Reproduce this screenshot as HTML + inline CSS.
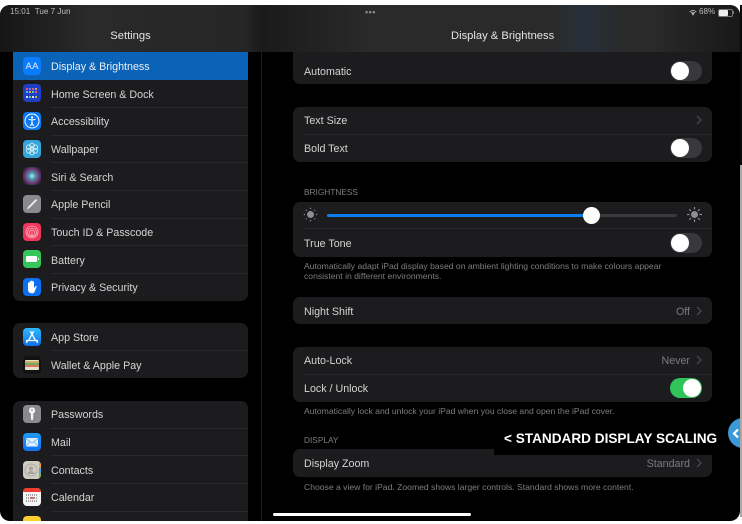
<!DOCTYPE html>
<html><head><meta charset="utf-8"><style>
html,body{margin:0;padding:0;background:#fff}
#s{position:relative;width:742px;height:524px;overflow:hidden;background:#fff;font-family:"Liberation Sans",sans-serif;color:#d4d4d4;font-size:10.7px;filter:blur(.3px)}
#s div,#s svg,#s span{position:absolute}
.t{white-space:nowrap;line-height:14px;height:14px;margin-top:.7px}
.card{background:#1c1c1e;left:293px;width:419px;border-radius:7px}
.scard{background:#1c1c1e;left:13px;width:235px}
.sep{height:1px;background:#29292b}
.ic{left:23px;width:18px;height:18px;border-radius:4px;overflow:hidden}
.tog{left:670px;width:32px;height:20px;border-radius:10px;background:#39393d}
.knob{width:18px;height:18px;border-radius:9px;background:#fff;top:1px;left:1px}
.v{color:#7c7c80}
.t.foot{color:#7e7e82;font-size:8.6px;left:304px;margin-top:-.5px}
.t.hdr{color:#7e7e82;font-size:8.3px;left:304px;margin-top:0}
.chev{left:696px;width:6px;height:10px}
.t.top{margin-top:0}
</style></head><body><div id="s">
<div id="scr" style="left:0;top:5px;width:740px;height:516px;background:#000;border-radius:10px;overflow:hidden">
<div style="left:0;top:0;width:740px;height:47px;background:linear-gradient(90deg,#161616 0,#2a2a2a 12%,#262626 33%,#1a1a1a 35.3%,#2a2a2a 50%,#2a2a2a 74%,#27303a 79%,#2a2a2a 84%,#2a2a2a 88%,#181818 100%)"></div>
<div style="left:261px;top:0;width:1px;height:516px;background:#1e1e1e"></div>
</div>
<div style="left:740px;top:5px;width:2px;height:160px;background:#0a0a0a"></div>

<div class="t top" style="left:10px;top:5px;font-size:8.1px;color:#bdbdbd">15:01&nbsp;&nbsp;Tue 7 Jun</div>
<div class="t top" style="left:365px;top:5px;font-size:9px;letter-spacing:.5px;color:#8a8a8a;font-weight:bold">•••</div>
<div class="t top" style="left:699px;top:5px;font-size:8.1px;color:#bdbdbd">68%</div>
<svg style="left:689px;top:9px" width="8" height="7" viewBox="0 0 8 7"><path d="M4 6.5 2.6 4.8a2 2 0 0 1 2.8 0zM1.6 3.8a3.6 3.6 0 0 1 4.8 0l-.5.6a2.8 2.8 0 0 0-3.8 0zM.4 2.500a5.4 5.4 0 0 1 7.2 0l-.5.6a4.6 4.6 0 0 0-6.2 0z" fill="#cfcfcf"/></svg>
<div style="left:718px;top:9px;width:13px;height:6px;border:1px solid #777;border-radius:2px"></div>
<div style="left:719px;top:10px;width:9px;height:6px;background:#eee;border-radius:1px"></div>
<div style="left:733px;top:11px;width:1px;height:3px;background:#777"></div>

<div class="t" style="left:0;width:261px;text-align:center;top:28.500px;font-size:11.2px;color:#e4e4e4">Settings</div>
<div class="t" style="left:451px;top:28.500px;font-size:11.2px;color:#e4e4e4">Display &amp; Brightness</div>

<!-- sidebar group 1 -->
<div class="scard" style="top:52px;height:249px;border-radius:0 0 7px 7px"></div>
<div style="left:13px;top:52px;width:235px;height:28px;background:#0b63b8"></div>
<div class="sep" style="left:51px;top:107px;width:197px"></div>
<div class="sep" style="left:51px;top:135px;width:197px"></div>
<div class="sep" style="left:51px;top:162px;width:197px"></div>
<div class="sep" style="left:51px;top:190px;width:197px"></div>
<div class="sep" style="left:51px;top:218px;width:197px"></div>
<div class="sep" style="left:51px;top:245px;width:197px"></div>
<div class="sep" style="left:51px;top:273px;width:197px"></div>
<div class="t" style="left:51px;top:59px;color:#e6eef6">Display &amp; Brightness</div>
<div class="t" style="left:51px;top:87px">Home Screen &amp; Dock</div>
<div class="t" style="left:51px;top:114px">Accessibility</div>
<div class="t" style="left:51px;top:142px">Wallpaper</div>
<div class="t" style="left:51px;top:170px">Siri &amp; Search</div>
<div class="t" style="left:51px;top:197px">Apple Pencil</div>
<div class="t" style="left:51px;top:225px">Touch ID &amp; Passcode</div>
<div class="t" style="left:51px;top:253px">Battery</div>
<div class="t" style="left:51px;top:280px">Privacy &amp; Security</div>

<!-- icons -->
<div class="ic" style="top:57px;background:#0a7cff"><div class="t top" style="left:2.500px;top:3px;font-size:9.500px;color:#e8f2ff;letter-spacing:.3px">AA</div></div>
<div class="ic" style="top:84px;background:#1f3fc4"><svg style="left:0;top:0" width="18" height="18" viewBox="0 0 18 18"><g><rect x="3" y="4" width="2" height="2" fill="#e05a7a"/><rect x="6" y="4" width="2" height="2" fill="#9a6ae0"/><rect x="9" y="4" width="2" height="2" fill="#e05a7a"/><rect x="12" y="4" width="2" height="2" fill="#e0a040"/><rect x="3" y="7" width="2" height="2" fill="#50c0e0"/><rect x="6" y="7" width="2" height="2" fill="#e0a040"/><rect x="9" y="7" width="2" height="2" fill="#60d080"/><rect x="12" y="7" width="2" height="2" fill="#e05a7a"/><rect x="3" y="12" width="2" height="2" fill="#d0e0f0"/><rect x="6" y="12" width="2" height="2" fill="#60d080"/><rect x="9" y="12" width="2" height="2" fill="#d0e0f0"/><rect x="12" y="12" width="2" height="2" fill="#e0a040"/></g></svg></div>
<div class="ic" style="top:112px;background:#0a78f5"><svg style="left:0;top:0" width="18" height="18" viewBox="0 0 18 18"><circle cx="9" cy="9" r="7" fill="none" stroke="#fff" stroke-width="1"/><circle cx="9" cy="5.500" r="1.200" fill="#fff"/><path d="M5.500 7.300 9 8l3.500-.7M9 8v3M9 11l-1.600 3M9 11l1.600 3" fill="none" stroke="#fff" stroke-width="1.100"/></svg></div>
<div class="ic" style="top:140px;background:#35a5d8"><svg style="left:0;top:0" width="18" height="18" viewBox="0 0 18 18"><g fill="none" stroke="#cfeaf5" stroke-width=".9"><circle cx="9" cy="9" r="2"/><circle cx="9" cy="5.500" r="2.400"/><circle cx="9" cy="12.500" r="2.400"/><circle cx="5.900" cy="7.200" r="2.400"/><circle cx="12.100" cy="7.200" r="2.400"/><circle cx="5.900" cy="10.800" r="2.400"/><circle cx="12.100" cy="10.800" r="2.400"/></g></svg></div>
<div class="ic" style="top:167px;background:radial-gradient(circle at 50% 50%,#cfe6f5 0,#3f9fb0 25%,#7a3a7a 55%,#1d2030 85%)"></div>
<div class="ic" style="top:195px;background:#8a8a8e"><svg style="left:0;top:0" width="18" height="18" viewBox="0 0 18 18"><path d="M4 14.500 5 12 13 4l1.200 1.200-8 8z" fill="#f2f2f2"/></svg></div>
<div class="ic" style="top:223px;background:#f0365a"><svg style="left:0;top:0" width="18" height="18" viewBox="0 0 18 18"><g fill="none" stroke="#f7b3c0" stroke-width=".8"><circle cx="9" cy="9" r="6"/><circle cx="9" cy="9.500" r="4.400"/><circle cx="9" cy="10" r="2.800"/><path d="M9 8.500v5"/></g></svg></div>
<div class="ic" style="top:250px;background:#35c759"><div style="left:3px;top:6px;width:11px;height:6px;background:#fff;border-radius:1px"></div><div style="left:15px;top:8px;width:1px;height:2px;background:#d8f5df"></div></div>
<div class="ic" style="top:278px;background:#0a70f0"><svg style="left:0;top:0" width="18" height="18" viewBox="0 0 18 18"><path d="M5 10V5a.8.8 0 0 1 1.500 0V3.600a.8.8 0 0 1 1.500 0V3a.8.8 0 0 1 1.500 0V3.800a.8.8 0 0 1 1.500 0V10l1.500-1.800c.7-.7 1.500 0 1 .8L11.500 14c-.5.800-1.200 1.300-2.400 1.300-2.200 0-4.100-1.200-4.100-3.500z" fill="#fff"/></svg></div>

<!-- group 2 -->
<div class="scard" style="top:323px;height:55px;border-radius:7px"></div>
<div class="sep" style="left:51px;top:350px;width:197px"></div>
<div class="t" style="left:51px;top:330px">App Store</div>
<div class="t" style="left:51px;top:358px">Wallet &amp; Apple Pay</div>
<div class="ic" style="top:328px;background:linear-gradient(#2fb8fa,#0d6ff0)"><svg style="left:0;top:0" width="18" height="18" viewBox="0 0 18 18"><path d="M10.500 3.500 5.500 12.500M7.500 3.500l5 9M3.500 12.500h11M3.500 14.500l1-1.600M14.500 14.500l-1-1.600" fill="none" stroke="#fff" stroke-width="1.300" stroke-linecap="round"/></svg></div>
<div class="ic" style="top:356px;background:#111"><div style="left:2px;top:4px;width:14px;height:10px;background:#e6e0c8;border-radius:1px"></div><div style="left:2px;top:5px;width:14px;height:1.500px;background:#c8b060"></div><div style="left:2px;top:7px;width:14px;height:1.500px;background:#70a868"></div><div style="left:2px;top:9px;width:14px;height:1.500px;background:#d8785a"></div></div>

<!-- group 3 -->
<div class="scard" style="top:401px;height:120px;border-radius:7px 7px 0 0"></div>
<div class="sep" style="left:51px;top:428px;width:197px"></div>
<div class="sep" style="left:51px;top:455px;width:197px"></div>
<div class="sep" style="left:51px;top:483px;width:197px"></div>
<div class="sep" style="left:51px;top:511px;width:197px"></div>
<div class="t" style="left:51px;top:407px">Passwords</div>
<div class="t" style="left:51px;top:435px">Mail</div>
<div class="t" style="left:51px;top:463px">Contacts</div>
<div class="t" style="left:51px;top:490px">Calendar</div>
<div class="ic" style="top:405px;background:#8a8a8e"><svg style="left:0;top:0" width="18" height="18" viewBox="0 0 18 18"><path d="M9 2.500a3 3 0 0 1 1.200 5.800V14l-1.200 1.500L7.900 14V8.300A3 3 0 0 1 9 2.500z" fill="#f5f5f5"/><circle cx="9" cy="5" r=".9" fill="#8a8a8e"/></svg></div>
<div class="ic" style="top:433px;background:linear-gradient(#1e9bfa,#1072f0)"><svg style="left:0;top:0" width="18" height="18" viewBox="0 0 18 18"><rect x="3" y="5" width="12" height="8.500" rx="1" fill="#dfeefc"/><path d="M3 5.500 9 10l6-4.500M3 13l4-4.500M15 13l-4-4.500" fill="none" stroke="#6ab0f0" stroke-width=".7"/></svg></div>
<div class="ic" style="top:461px;background:#cfcdc2"><div style="left:16px;top:2px;width:2px;height:5px;background:#e8a040"></div><div style="left:16px;top:7px;width:2px;height:5px;background:#5a9ee0"></div><div style="left:16px;top:12px;width:2px;height:5px;background:#70b860"></div><svg style="left:0;top:0" width="16" height="18" viewBox="0 0 16 18"><circle cx="8" cy="9" r="6" fill="none" stroke="#a5a39a" stroke-width=".8"/><circle cx="8" cy="7.500" r="2" fill="#a5a39a"/><path d="M4.500 13a3.500 3 0 0 1 7 0z" fill="#a5a39a"/></svg></div>
<div class="ic" style="top:488px;background:#f5f5f5"><div style="left:0;top:0;width:18px;height:4px;background:#f03a30"></div><svg style="left:0;top:0" width="18" height="18" viewBox="0 0 18 18"><g stroke="#555" stroke-width="1" stroke-dasharray="1 1"><path d="M3 7h12M3 10h12M3 13h12"/></g><path d="M7 10h4" stroke="#e0302a" stroke-width="1.500"/></svg></div>
<div class="ic" style="top:516px;background:#fccf2e;height:5px;border-radius:4px 4px 0 0"></div>
<div style="left:0;top:521px;width:742px;height:3px;background:#fff"></div>

<!-- right -->
<div class="card" style="top:52px;height:32px;border-radius:0 0 7px 7px"></div>
<div class="t" style="left:304px;top:64px">Automatic</div>
<div class="tog" style="top:61px"><div class="knob"></div></div>

<div class="card" style="top:107px;height:55px"></div>
<div class="sep" style="left:304px;top:134px;width:408px"></div>
<div class="t" style="left:304px;top:113px">Text Size</div>
<div class="t" style="left:304px;top:141px">Bold Text</div>
<svg class="chev" style="top:115px" viewBox="0 0 6 10"><path d="M1 1l4 4-4 4" fill="none" stroke="#505054" stroke-width="1.100"/></svg>
<div class="tog" style="top:138px"><div class="knob"></div></div>

<div class="t hdr" style="top:185px">BRIGHTNESS</div>
<div class="card" style="top:202px;height:55px"></div>
<div class="sep" style="left:304px;top:228px;width:408px"></div>
<svg style="left:303px;top:207px" width="15" height="15" viewBox="0 0 15 15"><circle cx="7.500" cy="7.500" r="3.500" fill="#8e8e92"/><path d="M7.500 .8v1.200M7.500 13v1.200M.8 7.500H2M13 7.500h1.200M2.800 2.800l.8.8M11.400 11.400l.8.8M2.800 12.200l.8-.8M11.400 3.600l.8-.8" stroke="#8e8e92" stroke-width="1.200"/></svg>
<svg style="left:687px;top:207px" width="15" height="15" viewBox="0 0 15 15"><circle cx="7.500" cy="7.500" r="3.500" fill="#8e8e92"/><path d="M7.500 0v2.500M7.500 12.500V15M0 7.500h2.500M12.500 7.500H15M2.200 2.200l1.800 1.800M11 11l1.800 1.800M2.200 12.800 4 11M11 4l1.800-1.800" stroke="#8e8e92" stroke-width="1.200"/></svg>
<div style="left:327px;top:214px;width:350px;height:2.500px;background:#3a3a3c;border-radius:2px"></div>
<div style="left:327px;top:214px;width:264px;height:2.500px;background:#0a7cf0;border-radius:2px"></div>
<div style="left:582.500px;top:206.500px;width:17px;height:17px;border-radius:50%;background:#fff"></div>
<div class="t" style="left:304px;top:236px">True Tone</div>
<div class="tog" style="top:233px"><div class="knob"></div></div>
<div class="t foot" style="top:259.500px">Automatically adapt iPad display based on ambient lighting conditions to make colours appear</div>
<div class="t foot" style="top:269.500px">consistent in different environments.</div>

<div class="card" style="top:297px;height:27px"></div>
<div class="t" style="left:304px;top:304px">Night Shift</div>
<div class="t v" style="right:52px;top:304px">Off</div>
<svg class="chev" style="top:306px" viewBox="0 0 6 10"><path d="M1 1l4 4-4 4" fill="none" stroke="#505054" stroke-width="1.100"/></svg>

<div class="card" style="top:347px;height:55px"></div>
<div class="sep" style="left:304px;top:374px;width:408px"></div>
<div class="t" style="left:304px;top:353px">Auto-Lock</div>
<div class="t v" style="right:52px;top:353px">Never</div>
<svg class="chev" style="top:355px" viewBox="0 0 6 10"><path d="M1 1l4 4-4 4" fill="none" stroke="#505054" stroke-width="1.100"/></svg>
<div class="t" style="left:304px;top:381px">Lock / Unlock</div>
<div class="tog" style="top:378px;background:#30c55a"><div class="knob" style="left:13px"></div></div>
<div class="t foot" style="top:404.500px">Automatically lock and unlock your iPad when you close and open the iPad cover.</div>

<div class="t hdr" style="top:433px">DISPLAY</div>
<div class="card" style="top:449px;height:28px"></div>
<div class="t" style="left:304px;top:456px">Display Zoom</div>
<div class="t v" style="right:52px;top:456px">Standard</div>
<svg class="chev" style="top:458px" viewBox="0 0 6 10"><path d="M1 1l4 4-4 4" fill="none" stroke="#505054" stroke-width="1.100"/></svg>
<div class="t foot" style="top:480.500px">Choose a view for iPad. Zoomed shows larger controls. Standard shows more content.</div>

<div style="left:494px;top:430px;width:232px;height:25px;background:#000"></div>
<div class="t top" style="left:504px;top:432px;font-size:13.600px;line-height:14px;color:#fff;font-weight:bold">&lt; STANDARD DISPLAY SCALING</div>
<div style="left:728px;top:418px;width:30px;height:30px;border-radius:50%;background:#3b9ad6"></div>
<svg style="left:732px;top:428px" width="8" height="11" viewBox="0 0 8 11"><path d="M6 1.500 2 5.500l4 4" fill="none" stroke="#fff" stroke-width="2.200"/></svg>
<div style="left:740px;top:165px;width:2px;height:352px;background:#a8a8a8"></div>
<div style="left:273px;top:513px;width:198px;height:3px;background:#fff;border-radius:2px"></div>
</div></body></html>
